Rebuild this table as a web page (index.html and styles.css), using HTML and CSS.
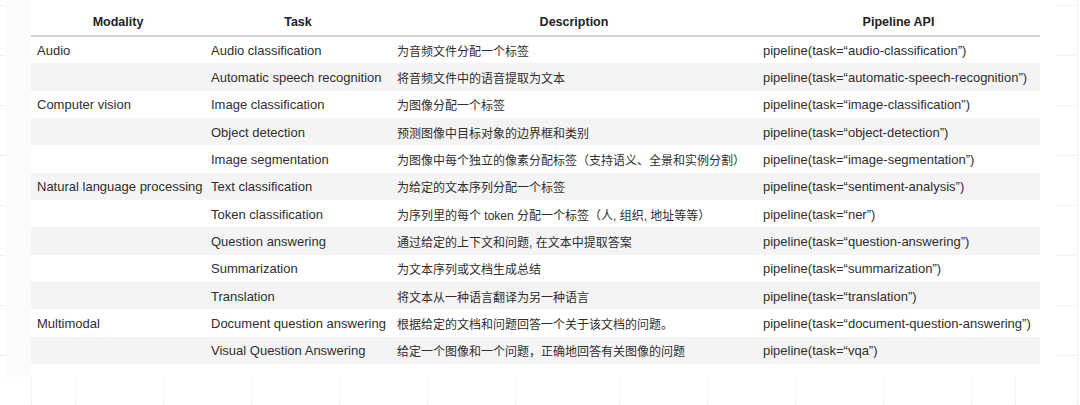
FILE: index.html
```html
<!DOCTYPE html>
<html lang="zh">
<head>
<meta charset="utf-8">
<title>Pipeline tasks</title>
<link rel="stylesheet" href="styles.css">
</head>
<body>
<div class="canvas" aria-hidden="true">
  <div class="side-panel"></div>
  <div class="ticks ticks-left"></div>
  <div class="ticks ticks-right"></div>
  <div class="vline-right"></div>
  <div class="grid-bottom"></div>
</div>
<main class="sheet">
  <table class="tasks">
    <colgroup>
      <col class="c1"><col class="c2"><col class="c3"><col class="c4">
    </colgroup>
    <thead>
      <tr><th>Modality</th><th>Task</th><th>Description</th><th>Pipeline API</th></tr>
    </thead>
    <tbody>
      <tr><td>Audio</td><td>Audio classification</td><td class="desc">为音频文件分配一个标签</td><td>pipeline(task=“audio-classification”)</td></tr>
      <tr><td></td><td>Automatic speech recognition</td><td class="desc">将音频文件中的语音提取为文本</td><td>pipeline(task=“automatic-speech-recognition”)</td></tr>
      <tr><td>Computer vision</td><td>Image classification</td><td class="desc">为图像分配一个标签</td><td>pipeline(task=“image-classification”)</td></tr>
      <tr><td></td><td>Object detection</td><td class="desc">预测图像中目标对象的边界框和类别</td><td>pipeline(task=“object-detection”)</td></tr>
      <tr><td></td><td>Image segmentation</td><td class="desc">为图像中每个独立的像素分配标签（支持语义、全景和实例分割）</td><td>pipeline(task=“image-segmentation”)</td></tr>
      <tr><td>Natural language processing</td><td>Text classification</td><td class="desc">为给定的文本序列分配一个标签</td><td>pipeline(task=“sentiment-analysis”)</td></tr>
      <tr><td></td><td>Token classification</td><td class="desc">为序列里的每个 token 分配一个标签（人, 组织, 地址等等）</td><td>pipeline(task=“ner”)</td></tr>
      <tr><td></td><td>Question answering</td><td class="desc">通过给定的上下文和问题, 在文本中提取答案</td><td>pipeline(task=“question-answering”)</td></tr>
      <tr><td></td><td>Summarization</td><td class="desc">为文本序列或文档生成总结</td><td>pipeline(task=“summarization”)</td></tr>
      <tr><td></td><td>Translation</td><td class="desc">将文本从一种语言翻译为另一种语言</td><td>pipeline(task=“translation”)</td></tr>
      <tr><td>Multimodal</td><td>Document question answering</td><td class="desc">根据给定的文档和问题回答一个关于该文档的问题。</td><td>pipeline(task=“document-question-answering”)</td></tr>
      <tr><td></td><td>Visual Question Answering</td><td class="desc">给定一个图像和一个问题，正确地回答有关图像的问题</td><td>pipeline(task=“vqa”)</td></tr>
    </tbody>
  </table>
</main>
</body>
</html>
```

FILE: styles.css
```css
html, body {
  margin: 0;
  padding: 0;
  background: #ffffff;
}
body {
  width: 1080px;
  height: 405px;
  overflow: hidden;
  position: relative;
  font-family: "Liberation Sans", "Noto Sans CJK SC", sans-serif;
  color: #2e2e2e;
}

/* decorative editor canvas behind the table */
.canvas {
  position: absolute;
  inset: 0;
  pointer-events: none;
}
.side-panel {
  position: absolute;
  left: 6px;
  top: 0;
  width: 25px;
  height: 377px;
  background: #fbfbfb;
}
.ticks {
  position: absolute;
  top: 5px;
  height: 360px;
  background-image: repeating-linear-gradient(to bottom, #e2e2e2 0, #e2e2e2 1px, transparent 1px, transparent 50px);
  -webkit-mask-image: repeating-linear-gradient(to right, #000 0, #000 1px, transparent 1px, transparent 2px);
  mask-image: repeating-linear-gradient(to right, #000 0, #000 1px, transparent 1px, transparent 2px);
}
.ticks-left { left: 0; width: 5px; }
.ticks-right { left: 1057px; width: 20px; }
.vline-right {
  position: absolute;
  left: 1077px;
  top: 0;
  width: 1px;
  height: 405px;
  background-image: repeating-linear-gradient(to bottom, #e6e6e6 0, #e6e6e6 1px, transparent 1px, transparent 2px);
}
.grid-bottom {
  position: absolute;
  left: 31px;
  top: 378px;
  width: 990px;
  height: 27px;
  background-image:
    repeating-linear-gradient(to right, transparent 0, transparent 44px, #ebebeb 44px, #ebebeb 45px, transparent 45px, transparent 132px, #ebebeb 132px, #ebebeb 133px, transparent 133px, transparent 220px, #ebebeb 220px, #ebebeb 221px, transparent 221px, transparent 308px, #ebebeb 308px, #ebebeb 309px, transparent 309px, transparent 396px, #ebebeb 396px, #ebebeb 397px, transparent 397px, transparent 484px, #ebebeb 484px, #ebebeb 485px, transparent 485px, transparent 588px, #ebebeb 588px, #ebebeb 589px, transparent 589px, transparent 676px, #ebebeb 676px, #ebebeb 677px, transparent 677px, transparent 764px, #ebebeb 764px, #ebebeb 765px, transparent 765px, transparent 852px, #ebebeb 852px, #ebebeb 853px, transparent 853px, transparent 940px, #ebebeb 940px, #ebebeb 941px, transparent 941px, transparent 984px, #ebebeb 984px, #ebebeb 985px, transparent 985px, transparent 990px),
    linear-gradient(to right, #ebebeb 0, #ebebeb 1px, transparent 1px);
  -webkit-mask-image: repeating-linear-gradient(to bottom, #000 0, #000 1px, transparent 1px, transparent 2px);
  mask-image: repeating-linear-gradient(to bottom, #000 0, #000 1px, transparent 1px, transparent 2px);
}

/* table */
.sheet {
  position: relative;
  padding: 0 40px 0 31px;
}
.tasks {
  width: 1009px;
  border-collapse: collapse;
  table-layout: fixed;
  font-size: 13px;
}
.c1 { width: 174px; }
.c2 { width: 186px; }
.c3 { width: 366px; }
.c4 { width: 283px; }

.tasks th {
  height: 36px;
  padding: 8px 6px 0;
  font-size: 12.5px;
  font-weight: bold;
  color: #222;
  text-align: center;
  border-bottom: 2px solid #d4d4d4;
  box-sizing: border-box;
}
.tasks td {
  height: 27.33px;
  padding: 1px 6px 0;
  white-space: nowrap;
  vertical-align: middle;
  box-sizing: border-box;
}
.tasks td.desc {
  font-size: 12px;
}
.tasks tbody tr:nth-child(even) td {
  background: #f4f4f4;
}
```
